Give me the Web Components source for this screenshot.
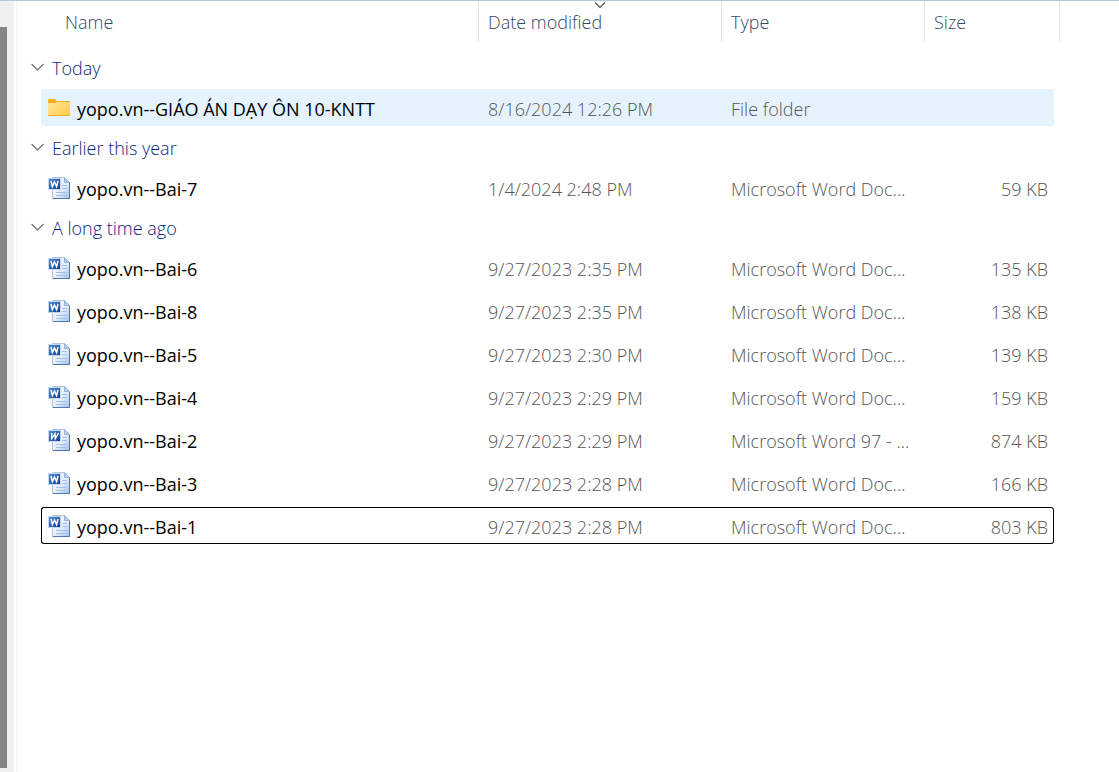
<!DOCTYPE html>
<html lang="en">
<head>
<meta charset="utf-8">
<meta name="viewport" content="width=device-width, initial-scale=1">
<title>File Explorer</title>
<style>
  body { margin: 0; background: #fff; font-family: "Open Sans", "Noto Sans", sans-serif; font-size: 18px; font-weight: 350; }
</style>
</head>
<body>
<explorer-window>
  <scroll-rail slot="rail"></scroll-rail>
  <file-table></file-table>
</explorer-window>

<template id="t-window">
  <style>
    :host { display: flex; box-sizing: border-box; min-height: 100vh; border-top: 1px solid #b9c6d6; }
    .rail { display: flex; flex: none; }
    main { flex: 1; min-width: 0; border-left: 2px solid #f7f7f7; margin-left: 2px; }
  </style>
  <div class="rail"><slot name="rail"></slot></div>
  <main><slot></slot></main>
</template>

<template id="t-rail">
  <style>
    :host { display: flex; box-sizing: border-box; width: 14px; padding: 26px 7px 4px 0; background: #f0f0f0; }
    .thumb { flex: 1; background: #858585; }
  </style>
  <div class="thumb"></div>
</template>

<template id="t-toggle">
  <style>
    :host { display: block; }
    button { display: flex; align-items: center; gap: 7px; height: 37px; margin: 0; padding: 0 0 0 13px; border: 0; background: none; font: inherit; color: #0c1f7a; }
    svg { display: block; width: 14px; height: 14px; margin-bottom: 2px; }
  </style>
  <button type="button" aria-expanded="true">
    <svg viewBox="0 0 14 14" aria-hidden="true"><path d="M.5 4l6 6 6-6" fill="none" stroke="#777" stroke-width="1.3"/></svg>
    <span><slot></slot></span>
  </button>
</template>

<template id="t-icon">
  <style>
    :host { display: block; flex: none; width: 22px; height: 24px; }
    svg { display: none; width: 22px; height: 24px; }
    :host([kind="folder"]) .folder, :host([kind="docx"]) .word, :host([kind="doc"]) .word { display: block; }
    .slant { display: none; }
    :host([kind="doc"]) .slant { display: inline; }
    :host([kind="doc"]) .upright { display: none; }
  </style>
  <svg class="folder" viewBox="0 0 22 24" aria-hidden="true">
    <defs><linearGradient id="f" x1="0" y1="0" x2="1" y2="1"><stop offset="0" stop-color="#ffe7a2"/><stop offset="1" stop-color="#ffca3e"/></linearGradient></defs>
    <path d="M0 5q0-2 1-2h6l1.500 2H21q1 0 1 1v6H0z" fill="#f3ad1c"/>
    <path d="M0 7h7.500l1.500-1H21q1 0 1 1v12q0 1-1 1H1q-1 0-1-1z" fill="url(#f)"/>
    <path d="M0 18.500q0 1.500 1 1.500h20q1 0 1-1.500l-1 .7H1z" fill="#e5a52c"/>
  </svg>
  <svg class="word" viewBox="0 0 22 24" aria-hidden="true">
    <defs>
      <linearGradient id="p" x1="0" y1="0" x2="1" y2="1"><stop offset="0" stop-color="#fff"/><stop offset=".55" stop-color="#e4eefa"/><stop offset="1" stop-color="#a0c0e8"/></linearGradient>
      <linearGradient id="b" x1="0" y1="0" x2="1" y2="1"><stop offset="0" stop-color="#4a90d6"/><stop offset="1" stop-color="#163f92"/></linearGradient>
    </defs>
    <path d="M4.500 1.500h12l5 5v16h-17z" fill="url(#p)" stroke="#b3c5de"/>
    <path d="M5 22.500h16.500V7" fill="none" stroke="#4f76ae"/>
    <path d="M16.500 1.500v5h5z" fill="#b5cdea" stroke="#8da9cf" stroke-width=".8"/>
    <path d="M14 9.500h5M14 12.500h5M8 16.500h11M8 19.500h11" stroke="#a9c1e0"/>
    <rect x="0" y="2" width="13" height="12" fill="#c3d7f0"/>
    <rect x="1" y="3" width="11" height="10" fill="url(#b)"/>
    <path class="upright" d="M3 5l1.400 5.600 2.100-4.600 2.100 4.600L10 5" fill="none" stroke="#fff" stroke-width="1.500"/>
    <path class="slant" d="M3.600 5l.2 5.600L7 5.600l.3 5L10.600 5" fill="none" stroke="#fff" stroke-width="1.400"/>
  </svg>
</template>

<template id="t-table">
  <style>
    :host { display: block; padding-right: 59px; }
    table { width: 100%; table-layout: fixed; border-collapse: separate; border-spacing: 0; }
    col.date { width: 243px; } col.type { width: 203px; } col.size { width: 135px; }
    th { text-align: left; font-weight: inherit; padding: 0; }
    thead th { position: relative; box-sizing: border-box; height: 41px; padding: 1px 0 0 9px; border-right: 1px solid #e2e2e2; color: #334a66; }
    thead th:first-child { padding-left: 47px; }
    thead svg { position: absolute; top: 0; left: 50%; width: 12px; height: 8px; margin-left: -6px; }
    thead::after { content: ""; display: block; height: 7px; }
    td { padding: 3px 0; color: #555; }
    td:first-child { padding-left: 23px; color: #000; font-weight: 380; }
    td:last-child { padding-right: 6px; }
    .cell { box-sizing: border-box; height: 37px; padding: 3px 9px 0; line-height: 32px; border: 0 solid transparent; border-width: 1px 0; white-space: nowrap; overflow: hidden; text-overflow: ellipsis; }
    td:first-child .cell { display: flex; align-items: center; gap: 7px; padding: 0 0 0 6px; border-left-width: 1px; border-radius: 3px 0 0 3px; }
    .name { padding-top: 2px; }
    td:last-child .cell { padding-right: 5px; text-align: right; border-right-width: 1px; border-radius: 0 3px 3px 0; }
    tr.hover .cell { background: #e5f3ff; border-color: #e5f3ff; }
    tr.focus .cell { border-color: #000; }
  </style>
  <table>
    <colgroup><col><col class="date"><col class="type"><col class="size"></colgroup>
    <thead><tr>
      <th scope="col">Name</th>
      <th scope="col" aria-sort="descending">Date modified<svg viewBox="0 0 12 8" aria-hidden="true"><path d="M1 1.500l5 5 5-5" fill="none" stroke="#555" stroke-width="1.200"/></svg></th>
      <th scope="col">Type</th>
      <th scope="col">Size</th>
    </tr></thead>
  </table>
</template>

<script>
  const define = (name, id) => customElements.define(name, class extends HTMLElement {
    constructor() {
      super();
      this.attachShadow({ mode: "open" }).append(document.getElementById(id).content.cloneNode(true));
    }
  });
  define("file-icon", "t-icon");
  define("group-toggle", "t-toggle");
  define("scroll-rail", "t-rail");
  define("explorer-window", "t-window");

  const WORD = "Microsoft Word Doc...";
  const GROUPS = [
    ["Today", [["folder", "yopo.vn--GIÁO ÁN DẠY ÔN 10-KNTT", "8/16/2024 12:26 PM", "File folder", "", "hover"]]],
    ["Earlier this year", [["docx", "yopo.vn--Bai-7", "1/4/2024 2:48 PM", WORD, "59 KB", ""]]],
    ["A long time ago", [
      ["docx", "yopo.vn--Bai-6", "9/27/2023 2:35 PM", WORD, "135 KB", ""],
      ["docx", "yopo.vn--Bai-8", "9/27/2023 2:35 PM", WORD, "138 KB", ""],
      ["docx", "yopo.vn--Bai-5", "9/27/2023 2:30 PM", WORD, "139 KB", ""],
      ["docx", "yopo.vn--Bai-4", "9/27/2023 2:29 PM", WORD, "159 KB", ""],
      ["doc", "yopo.vn--Bai-2", "9/27/2023 2:29 PM", "Microsoft Word 97 - ...", "874 KB", ""],
      ["docx", "yopo.vn--Bai-3", "9/27/2023 2:28 PM", WORD, "166 KB", ""],
      ["docx", "yopo.vn--Bai-1", "9/27/2023 2:28 PM", WORD, "803 KB", "focus"]
    ]]
  ];

  customElements.define("file-table", class extends HTMLElement {
    constructor() {
      super();
      const root = this.attachShadow({ mode: "open" });
      root.append(document.getElementById("t-table").content.cloneNode(true));
      root.querySelector("table").insertAdjacentHTML("beforeend", GROUPS.map(([title, files]) =>
        `<tbody><tr><th colspan="4" scope="rowgroup"><group-toggle>${title}</group-toggle></th></tr>` +
        files.map(([kind, name, date, type, size, state]) =>
          `<tr class="${state}"><td><div class="cell"><file-icon kind="${kind}"></file-icon><span class="name">${name}</span></div></td>` +
          `<td><div class="cell">${date}</div></td><td><div class="cell">${type}</div></td><td><div class="cell">${size}</div></td></tr>`
        ).join("") + `</tbody>`).join(""));
    }
  });
</script>
</body>
</html>
